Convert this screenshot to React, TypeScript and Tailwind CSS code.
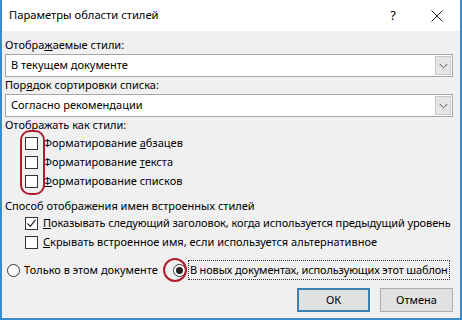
import { ReactNode } from "react";

const font = { fontFamily: '"Noto Sans", "Open Sans", sans-serif' };

function Combo({ value }: { value: string }) {
  return (
    <div className="flex h-[23px] w-[448px] items-center border border-[#a6a6a6] bg-white pl-[5px] pr-[1px]">
      <span className="flex-1">{value}</span>
      <div className="flex h-[19px] w-[16px] items-center justify-center border border-[#c8c8c8] bg-[#e6e6e6]">
        <svg width="9" height="6" viewBox="0 0 9 6">
          <path d="M0.5 0.8 L4.5 4.8 L8.5 0.8" fill="none" stroke="#555" strokeWidth="1" />
        </svg>
      </div>
    </div>
  );
}

function Check({ checked, children }: { checked?: boolean; children: ReactNode }) {
  return (
    <div className="flex h-[19px] items-center whitespace-nowrap pl-[20px]">
      <div className="mr-[5px] flex h-[13px] w-[13px] shrink-0 items-center justify-center border border-[#333] bg-white">
        {checked && (
          <svg width="11" height="11" viewBox="0 0 11 11">
            <path d="M1.5 5.5 L4.2 8.3 L9.5 1.8" fill="none" stroke="#222" strokeWidth="1.2" />
          </svg>
        )}
      </div>
      <span>{children}</span>
    </div>
  );
}

function Radio({ checked }: { checked?: boolean }) {
  return (
    <div className="flex h-[13px] w-[13px] shrink-0 items-center justify-center rounded-full border border-[#333] bg-white">
      {checked && <div className="h-[7px] w-[7px] rounded-full bg-[#222]" />}
    </div>
  );
}

export default function App() {
  return (
    <div
      className="relative flex h-[320px] w-[462px] flex-col whitespace-nowrap border-x-2 border-b-2 border-[#3b8bcb] bg-[#f0f0f0] text-[11px] text-black"
      style={font}
    >
      <div className="flex h-[31px] items-center bg-white pl-[7px] pr-[17px]">
        <span className="flex-1 text-[11.2px]">Параметры области стилей</span>
        <span className="mr-[35px] text-[13px]">?</span>
        <svg width="12" height="12" viewBox="0 0 12 12">
          <path d="M0.5 0.5 L11.5 11.5 M11.5 0.5 L0.5 11.5" stroke="#222" strokeWidth="1" />
        </svg>
      </div>

      <div className="flex flex-col px-[3px] pt-[5px]">
        <div className="flex h-[18px] items-center">
          Отобра<u>ж</u>аемые стили:
        </div>
        <Combo value="В текущем документе" />
        <div className="flex h-[17px] items-center">
          Пор<u>я</u>док сортировки списка:
        </div>
        <Combo value="Согласно рекомендации" />
        <div className="flex h-[17px] items-center">Отображать как стили:</div>
        <Check>
          Форматирование <u>а</u>бзацев
        </Check>
        <Check>
          Форматирование <u>т</u>екста
        </Check>
        <Check>
          <u>Ф</u>орматирование списков
        </Check>
        <div className="mt-[7px] flex h-[16px] items-center">
          Способ отображения имен встроенных стилей
        </div>
        <Check checked>
          <span className="tracking-[-0.1px]">
            <u>П</u>оказывать следующий заголовок, когда используется предыдущий уровень
          </span>
        </Check>
        <Check>
          <u>С</u>крывать встроенное имя, если используется альтернативное
        </Check>
        <div className="mt-[8px] flex h-[20px] items-center pl-[2px]">
          <Radio />
          <span className="ml-[4px]">Только в этом документе</span>
          <div className="ml-[15px]">
            <Radio checked />
          </div>
          <span className="ml-[2px] flex h-[20px] items-center border border-dotted border-[#333] pl-[1px] pr-[1px] tracking-[-0.15px]">
            В новых документах, использующих этот шаблон
          </span>
        </div>
        <div className="mt-[8px] flex justify-end gap-[10px] pr-[4px]">
          <button className="h-[24px] w-[73px] border-2 border-[#3c7fb1] bg-[#e1e1e1]">ОК</button>
          <button className="h-[24px] w-[73px] border border-[#adadad] bg-[#e1e1e1]">Отмена</button>
        </div>
      </div>

      <div className="pointer-events-none absolute left-[18px] top-[130px] h-[65px] w-[25px] rounded-[10px] border-2 border-[#b01c2e]" />
      <div className="pointer-events-none absolute left-[161px] top-[258px] h-[24px] w-[24px] rounded-full border-2 border-[#b01c2e]" />
    </div>
  );
}
